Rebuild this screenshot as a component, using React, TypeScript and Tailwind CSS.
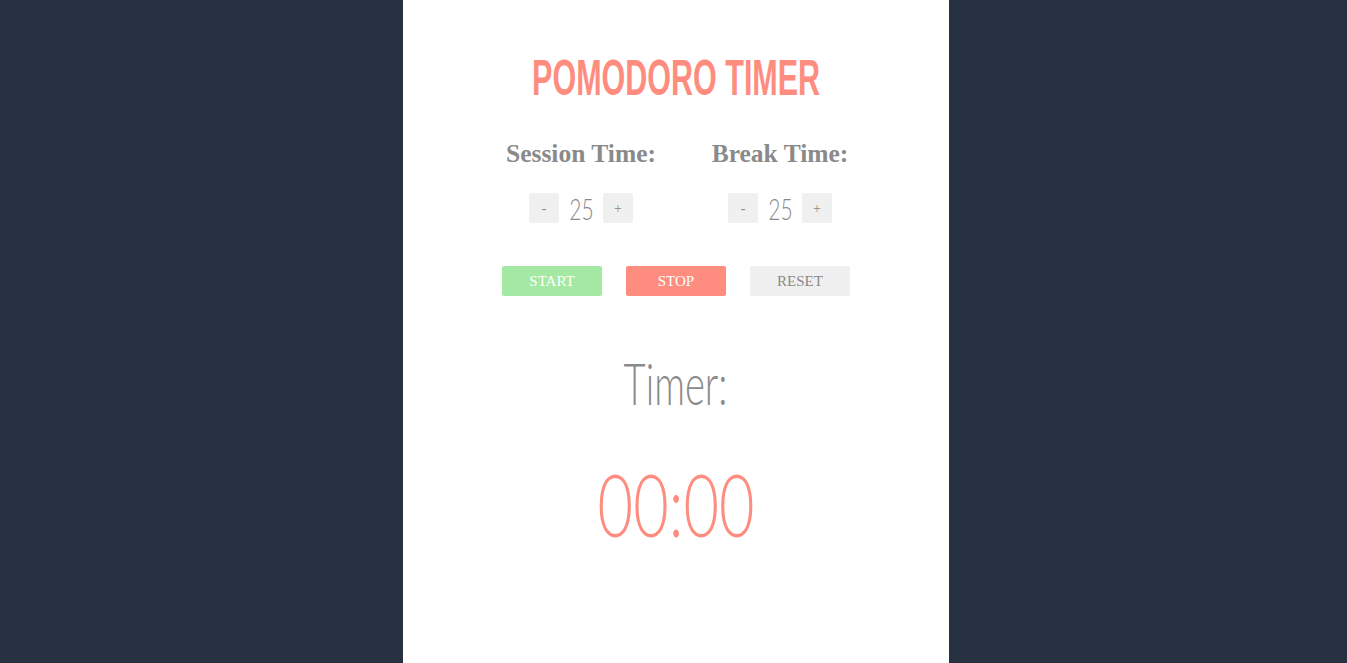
import React from "react";

const sans = { fontFamily: '"Liberation Sans", Arial, sans-serif' };
const light = { fontFamily: 'Lato, "Open Sans", sans-serif' };
const serif = { fontFamily: '"Liberation Serif", "Times New Roman", serif' };

function Counter({ label, value }: { label: string; value: number }) {
  return (
    <div className="flex w-[150px] flex-col items-center">
      <div className="whitespace-nowrap text-[25.5px] font-bold leading-[30px] text-[#8a8a8a]" style={serif}>
        {label}
      </div>
      <div className="mt-[24px] flex items-center gap-[10px]">
        <button className="flex h-[30px] w-[30px] items-center justify-center rounded-[2px] bg-[#f0f0f0] text-[14px] text-[#8a8a8a]" style={serif}>
          -
        </button>
        <div className="flex w-[24px] justify-center">
          <span className="inline-block scale-x-[0.7] whitespace-nowrap text-[30px] font-light leading-[30px] text-[#8a8a8a]" style={light}>
            {value}
          </span>
        </div>
        <button className="flex h-[30px] w-[30px] items-center justify-center rounded-[2px] bg-[#f0f0f0] text-[14px] text-[#8a8a8a]" style={serif}>
          +
        </button>
      </div>
    </div>
  );
}

export default function App() {
  return (
    <div className="flex min-h-[663px] w-full justify-center bg-[#283141] pl-[5px]">
      <div className="flex w-[546px] flex-col items-center bg-white">
        <h1 className="mt-[53px] flex justify-center">
          <span className="inline-block scale-x-[0.61] whitespace-nowrap text-[50px] font-bold leading-[50px] text-[#fe8c7f]" style={sans}>
            POMODORO TIMER
          </span>
        </h1>
        <div className="mt-[36px] flex gap-[49px] pl-[9px]">
          <Counter label="Session Time:" value={25} />
          <Counter label="Break Time:" value={25} />
        </div>
        <div className="mt-[43px] flex gap-[24px]">
          <button className="h-[30px] w-[100px] rounded-[2px] bg-[#a3e9a4] text-[15px] text-white" style={serif}>
            START
          </button>
          <button className="h-[30px] w-[100px] rounded-[2px] bg-[#fe8c7f] text-[15px] text-white" style={serif}>
            STOP
          </button>
          <button className="h-[30px] w-[100px] rounded-[2px] bg-[#f0f0f0] text-[15px] text-[#8a8a8a]" style={serif}>
            RESET
          </button>
        </div>
        <div className="mt-[57px] flex justify-center">
          <span className="inline-block scale-x-[0.67] whitespace-nowrap text-[57px] font-light leading-[60px] text-[#8a8a8a]" style={light}>
            Timer:
          </span>
        </div>
        <div className="mt-[46px] flex justify-center">
          <span className="inline-block scale-x-[0.713] whitespace-nowrap text-[86px] font-light leading-[90px] text-[#fe8c7f]" style={light}>
            00:00
          </span>
        </div>
      </div>
    </div>
  );
}
